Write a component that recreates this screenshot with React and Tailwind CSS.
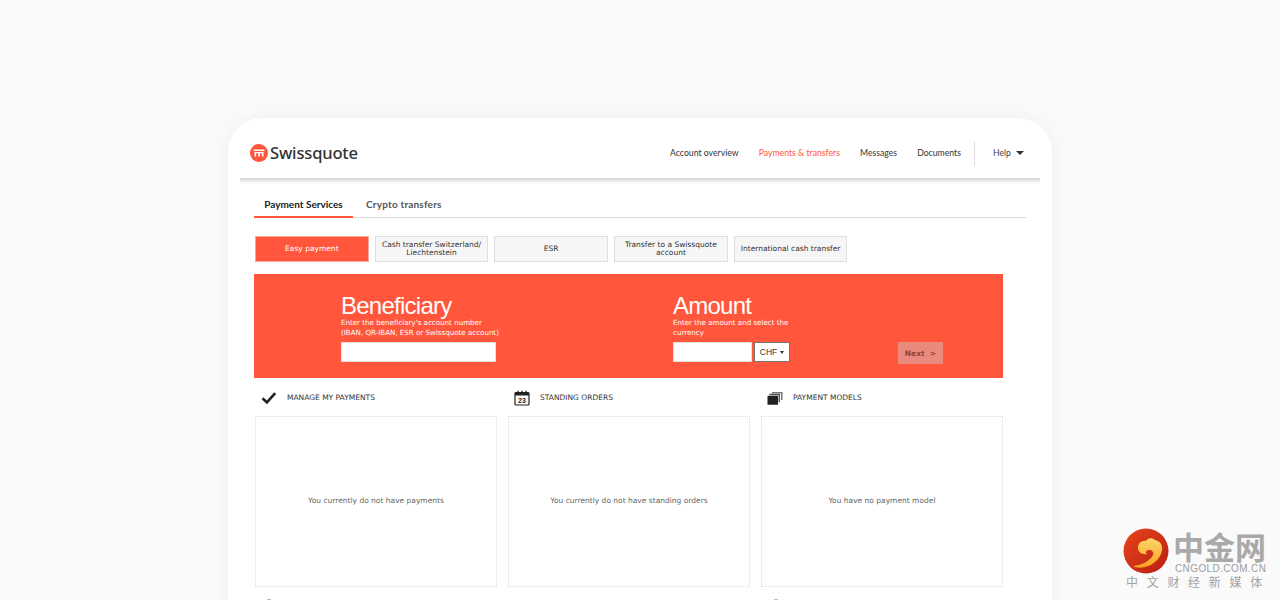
import React from "react";

const navItems = [
  { label: "Account overview", active: false },
  { label: "Payments & transfers", active: true },
  { label: "Messages", active: false },
  { label: "Documents", active: false },
];

const services = [
  { label: "Easy payment", active: true },
  { label: "Cash transfer Switzerland/ Liechtenstein" },
  { label: "ESR" },
  { label: "Transfer to a Swissquote account" },
  { label: "International cash transfer" },
];

function Logo() {
  return (
    <svg width="18" height="18" viewBox="0 0 18 18">
      <circle cx="9" cy="9" r="9" fill="#ff563c" />
      <path d="M3.5 5.5h11v1.4h-11z M4.5 8h9v4.5h-1.6V9.3h-2.1v3.2H8.2V9.3H6.1v3.2H4.5z" fill="#fff" />
    </svg>
  );
}

function CheckIcon() {
  return (
    <svg width="16" height="14" viewBox="0 0 16 14">
      <path d="M1.5 7.2l4.4 4.2L14.2 2.2" fill="none" stroke="#222" strokeWidth="2.6" />
    </svg>
  );
}

function CalendarIcon() {
  return (
    <svg width="16" height="16" viewBox="0 0 16 16">
      <rect x="1" y="2.5" width="14" height="12.5" rx="1" fill="#fff" stroke="#222" strokeWidth="1.2" />
      <rect x="1" y="2.5" width="14" height="3" fill="#222" />
      <path d="M4 .8v3 M8 .8v3 M12 .8v3" stroke="#222" strokeWidth="1.3" />
      <text x="8" y="13" textAnchor="middle" fontSize="7" fontWeight="700" fontFamily="Liberation Sans" fill="#222">23</text>
    </svg>
  );
}

function StackIcon() {
  return (
    <svg width="16" height="13" viewBox="0 0 16 13">
      <path d="M5 0h10.5v8H14V1.4H5z" fill="#777" />
      <path d="M2.5 1.8H13v8.4h-1.4V3.2H2.5z" fill="#555" />
      <rect x="0.5" y="3.8" width="10.5" height="9" rx="0.6" fill="#222" />
    </svg>
  );
}

function Watermark() {
  return (
    <div className="absolute left-[1123px] top-[528px] w-[144px]">
      <div className="flex items-start gap-[4px]">
        <svg width="46" height="46" viewBox="0 0 46 46" className="shrink-0">
          <defs>
            <linearGradient id="wm" x1="0" y1="0" x2="1" y2="1">
              <stop offset="0" stopColor="#e8441a" />
              <stop offset="1" stopColor="#b81f14" />
            </linearGradient>
            <linearGradient id="wm2" x1="0" y1="0" x2="0" y2="1">
              <stop offset="0" stopColor="#ffd56a" />
              <stop offset="1" stopColor="#f9a11f" />
            </linearGradient>
          </defs>
          <circle cx="23" cy="23" r="22.5" fill="url(#wm)" />
          <path
            d="M10 38c9-1 17-5 20-11 1-3-1-5-4-5-3 0-4 3-2 4-5 1-9-2-9-6 0-5 4-8 8-7 1-3 6-4 9-1 5 1 8 5 7 10-1 8-8 15-17 17-5 1-9 1-12-1z"
            fill="url(#wm2)"
          />
        </svg>
        <div className="mt-[2px] flex flex-col">
          <div className="h-[32px] font-['Noto_Sans_CJK_SC',sans-serif] text-[31px] leading-[32px] font-bold text-[#a9a9a9] whitespace-nowrap">
            中金网
          </div>
          <div className="pl-[2px] pt-px font-['Liberation_Sans',sans-serif] text-[10px] leading-[12px] tracking-[0.4px] text-[#9c9c9c] whitespace-nowrap">
            CNGOLD.COM.CN
          </div>
        </div>
      </div>
      <div className="font-['Noto_Sans_CJK_SC',sans-serif] text-[12px] leading-[14px] tracking-[8.7px] text-[#a3a3a3] whitespace-nowrap pl-[3px]">
        中文财经新媒体
      </div>
    </div>
  );
}

function Column({ icon, title, message, markOffset }) {
  return (
    <div className="w-[242px]">
      <div className="flex items-center h-[38px] pt-[2px]">
        <span className="w-[27px] flex justify-center mr-[5px]">{icon}</span>
        <span className="text-[7.5px] text-[#333]">{title}</span>
      </div>
      <div className="h-[171px] pb-px border border-dotted border-[#dcdcdc] flex items-center justify-center text-[7.5px] text-[#666]">
        {message}
      </div>
      {/* top of the next row's icon, cut off by the window */}
      {markOffset && <div className={`mt-[12px] w-[4px] h-px bg-[#bdbdbd] ${markOffset}`} />}
    </div>
  );
}

export default function App() {
  return (
    <div className="relative h-[600px] overflow-hidden bg-[#fafafa] flex justify-center pt-[118px] font-['DejaVu_Sans',sans-serif]">
      <div className="w-[824px] h-[600px] rounded-t-[34px] bg-white px-3 shadow-[0_0_20px_rgba(0,0,0,0.05)]">
        {/* header */}
        <header className="h-[60px] pt-[10px] flex items-center justify-between pl-[10px] pr-[16px] font-['Lato',sans-serif]">
          <div className="flex items-center gap-[2px]">
            <Logo />
            <span className="font-['Noto_Sans',sans-serif] text-[16.6px] font-medium text-[#333] tracking-[-0.2px]">Swissquote</span>
          </div>
          <nav className="flex items-center text-[8.7px]">
            {navItems.map((item) => (
              <a key={item.label} className={`mr-[20px] ${item.active ? "text-[#ff563c]" : "text-[#333]"}`}>
                {item.label}
              </a>
            ))}
            <span className="h-[25px] w-px bg-[#dddddd] -ml-[7px] mr-[18px]" />
            <span className="text-[#444]">Help</span>
            <span className="ml-[5px] border-x-[4px] border-t-[4px] border-x-transparent border-t-[#333]" />
          </nav>
        </header>
        <div className="h-[6px] bg-gradient-to-b from-[#d6d6d6] to-white" />

        <div className="pl-[14px]">
          {/* tabs */}
          <div className="mt-[12px] mr-[14px] h-[22px] flex border-b border-[#d9d9d9] font-['Lato',sans-serif] text-[10px] font-bold">
            <div className="w-[99px] h-[22px] flex items-start justify-center pt-[1px] border-b-2 border-[#ff563c] text-[#222]">Payment Services</div>
            <div className="ml-[13px] pt-[1px] tracking-[0.2px] text-[#555]">Crypto transfers</div>
          </div>

          {/* payment type buttons */}
          <div className="mt-[18px] ml-px flex gap-[6px]">
            {services.map((s) => (
              <div
                key={s.label}
                className={`w-[113.7px] h-[26px] px-1 flex items-center justify-center text-center text-[7.5px] leading-[8px] border ${
                  s.active ? "bg-[#ff563c] border-[#f4a99c] text-white" : "bg-[#f6f6f6] border-[#dfdfdf] text-[#333]"
                }`}
              >
                {s.label}
              </div>
            ))}
          </div>

          {/* easy payment form */}
          <div className="mt-[12px] w-[749px] h-[104px] bg-[#ff563c] pl-[87px] pt-[20px] flex text-white">
            <div className="w-[332px]">
              <h2 className="font-['Liberation_Sans',sans-serif] text-[24px] leading-[24px] tracking-[-0.75px]">Beneficiary</h2>
              <p className="text-[7.1px] leading-[10px]">
                Enter the beneficiary's account number
                <br />
                (IBAN, QR-IBAN, ESR or Swissquote account)
              </p>
              <div className="mt-[4px] w-[155px] h-[20px] bg-white border border-[#e0e0e0]" />
            </div>
            <div className="w-[225px]">
              <h2 className="font-['Liberation_Sans',sans-serif] text-[24px] leading-[24px] tracking-[-0.75px]">Amount</h2>
              <p className="w-[125px] text-[7.1px] leading-[10px]">Enter the amount and select the currency</p>
              <div className="mt-[4px] flex gap-[2px]">
                <div className="w-[79px] h-[20px] bg-white border border-[#e0e0e0]" />
                <div className="w-[36px] h-[20px] bg-white border border-[#777] flex items-center justify-center gap-[3px] font-['Liberation_Sans',sans-serif] text-[8.5px] text-[#333]">
                  CHF
                  <span className="border-x-[2.5px] border-t-[3px] border-x-transparent border-t-[#333]" />
                </div>
              </div>
            </div>
            <div className="self-start mt-[48px] w-[45px] h-[22px] pt-px bg-[#e98a7c] flex items-center justify-center text-[7.5px] font-bold text-[#9a3f30]">
              Next &nbsp;&gt;
            </div>
          </div>

          {/* overview columns */}
          <div className="ml-px flex gap-[11px]">
            <Column icon={<CheckIcon />} title="MANAGE MY PAYMENTS" message="You currently do not have payments" markOffset="ml-[12px]" />
            <Column icon={<CalendarIcon />} title="STANDING ORDERS" message="You currently do not have standing orders" />
            <Column icon={<StackIcon />} title="PAYMENT MODELS" message="You have no payment model" markOffset="ml-[13px]" />
          </div>
        </div>
      </div>
      <Watermark />
    </div>
  );
}
